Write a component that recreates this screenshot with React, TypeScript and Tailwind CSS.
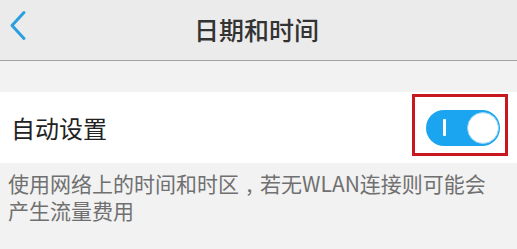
export default function App() {
  return (
    <div
      className="w-[517px] h-[249px] bg-[#f2f2f2] overflow-hidden"
      style={{ fontFamily: '"Noto Sans CJK SC", "Noto Sans", sans-serif' }}
    >
      <div className="relative h-[61px] bg-[#ebebeb] border-b border-[#a3a3a3] flex items-center justify-center">
        <svg
          className="absolute left-[8px] top-[10px]"
          width="20"
          height="31"
          viewBox="0 0 20 31"
          fill="none"
        >
          <path
            d="M16 2.5 L4 15.5 L16 28.5"
            stroke="#2a9fe0"
            strokeWidth="3"
            strokeLinecap="round"
            strokeLinejoin="round"
          />
        </svg>
        <span className="text-[25px] leading-none font-medium text-[#333333] -mt-[1px] -ml-[4px]">日期和时间</span>
      </div>
      <div className="h-[31px]" />
      <div className="h-[71px] bg-white flex items-center justify-between pl-[11px] pr-[9px]">
        <span className="text-[24px] leading-none text-[#222222] mt-[1px]">自动设置</span>
        <div className="w-[96px] h-[62px] border-[3px] border-[#c8171e] pl-[11px] pt-[13px] mb-[5px]">
          <div className="relative w-[74px] h-[36px] rounded-full bg-[#1ba4ef]">
            <div className="absolute left-[17px] top-[9px] w-[3px] h-[17px] bg-white rounded-[1px]" />
            <div className="absolute right-[1px] top-[2px] w-[32px] h-[32px] rounded-full bg-white border border-[#8fd0f5]" />
          </div>
        </div>
      </div>
      <div className="pl-[8px] pt-[7px] text-[21px] leading-[27px] text-[#707070]">
        <div>
          使用网络上的时间和时区<span className="inline-block w-[21px] text-center">,</span>若无WLAN连接则可能会
        </div>
        <div>产生流量费用</div>
      </div>
    </div>
  );
}
